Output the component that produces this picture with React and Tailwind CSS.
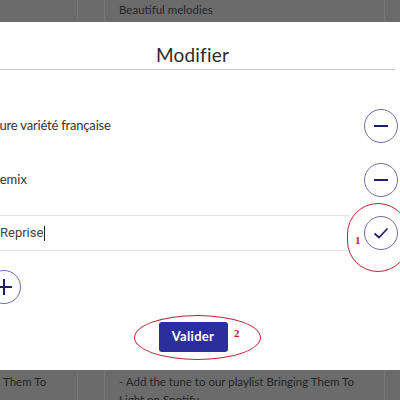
export default function App() {
  const font = { fontFamily: "Lato, 'Noto Sans', sans-serif" };

  const Circle = ({ children }) => (
    <div className="w-[34px] h-[34px] shrink-0 rounded-full border border-[#6f6fa8] bg-white flex items-center justify-center">
      {children}
    </div>
  );

  return (
    <div className="w-[400px] h-[400px] overflow-hidden bg-[#6b6b6b] flex flex-col" style={font}>
      {/* table row behind, top */}
      <div className="h-[22px] shrink-0 flex text-[11.5px] text-[#262626]">
        <div className="w-[78px] border-r border-[#787878]" />
        <div className="w-[27px] border-r border-[#787878]" />
        <div className="w-[280px] border-r border-[#787878] pl-[14px] leading-[20px]">Beautiful melodies</div>
        <div className="flex-1" />
      </div>

      {/* modal */}
      <div className="h-[348px] shrink-0 bg-white relative">
        <div className="h-[48px] border-b border-[#c8c8c8] mr-[5px] flex items-start justify-center pt-[21px]">
          <h2 className="text-[19px] text-[#2b2b2b] leading-[24px] pr-[10px] tracking-[0.2px]">Modifier</h2>
        </div>

        <div className="flex flex-col pr-[2px]">
          <div className="h-[54px] mt-[29px] flex items-center justify-between">
            <span className="ml-[-8px] text-[13px] text-[#333] tracking-[-0.2px]">Pure variété française</span>
            <Circle>
              <svg width="14" height="2" viewBox="0 0 14 2"><rect width="14" height="2" fill="#1e1f6b" /></svg>
            </Circle>
          </div>
          <div className="h-[54px] flex items-center justify-between">
            <span className="ml-[-8px] text-[13px] text-[#333]">Remix</span>
            <Circle>
              <svg width="14" height="2" viewBox="0 0 14 2"><rect width="14" height="2" fill="#1e1f6b" /></svg>
            </Circle>
          </div>
          <div className="h-[52px] flex items-center justify-between">
            <div className="w-[350px] h-[36px] border-y border-[#e3e3e3] flex items-center text-[13px] text-[#444]" style={{ fontFamily: "Roboto, sans-serif" }}>
              Reprise<span className="w-px h-[15px] bg-[#222] ml-px" />
            </div>
            <Circle>
              <svg width="16" height="12" viewBox="0 0 16 12" fill="none"><path d="M1.5 6.5 L6 10.5 L14.5 1.5" stroke="#23246e" strokeWidth="1.8" /></svg>
            </Circle>
          </div>
          <div className="h-[56px] flex items-center">
            <div className="ml-[-13px]">
              <Circle>
                <svg width="16" height="16" viewBox="0 0 16 16"><rect x="7" y="0" width="2" height="16" fill="#1e1f6b" /><rect x="0" y="7" width="16" height="2" fill="#1e1f6b" /></svg>
              </Circle>
            </div>
          </div>
          <div className="flex justify-center mt-[7px] pr-[12px]">
            <button className="w-[69px] h-[30px] rounded-[3px] bg-[#2b2e9c] text-white text-[13px] font-bold tracking-[0.3px]">Valider</button>
          </div>
        </div>

        {/* annotation marks */}
        <div className="absolute left-[347px] top-[181px] w-[62px] h-[69px] rounded-full border border-[#b52a35]" />
        <span className="absolute left-[355px] top-[210px] text-[11px] font-bold text-[#c0232e]" style={{ fontFamily: "'Liberation Serif', serif" }}>1</span>
        <div className="absolute left-[134px] top-[293px] w-[127px] h-[45px] rounded-[50%] border border-[#b52a35]" />
        <span className="absolute left-[234px] top-[303px] text-[11px] font-bold text-[#c0232e]" style={{ fontFamily: "'Liberation Serif', serif" }}>2</span>
      </div>

      {/* table row behind, bottom */}
      <div className="flex-1 flex text-[11.5px] text-[#262626] leading-[18px]">
        <div className="w-[78px] border-r border-[#787878] pl-[3px] pt-[3px]">Them To</div>
        <div className="w-[27px] border-r border-[#787878]" />
        <div className="w-[280px] border-r border-[#787878] pl-[14px] pt-[3px]">
          <div className="whitespace-nowrap">- Add the tune to our playlist Bringing Them To</div>
          <div>Light on Spotify</div>
        </div>
        <div className="flex-1" />
      </div>
    </div>
  );
}
